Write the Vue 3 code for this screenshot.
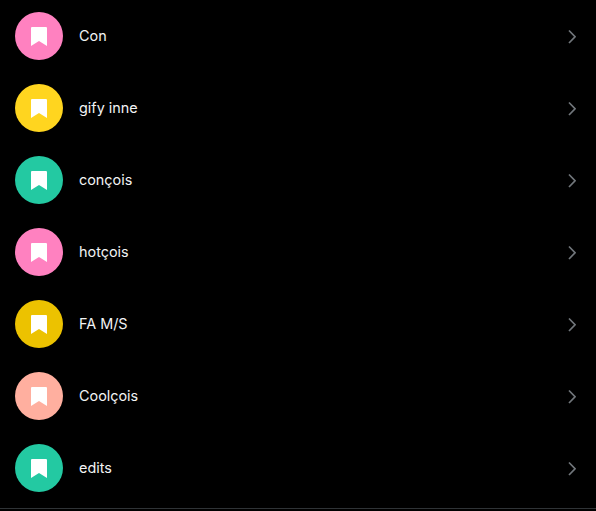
<script setup>
const lists = [
  { name: 'Con', color: '#ff81c0' },
  { name: 'gify inne', color: '#ffd51f' },
  { name: 'conçois', color: '#23c9a2' },
  { name: 'hotçois', color: '#ff81c0' },
  { name: 'FA M/S', color: '#ecc200' },
  { name: 'Coolçois', color: '#ffaf9f' },
  { name: 'edits', color: '#23c9a2' }
]
</script>

<template>
  <div class="lists">
    <div v-for="list in lists" :key="list.name" class="row">
      <div class="avatar" :style="{ background: list.color }">
        <svg viewBox="0 0 16 19" class="bookmark">
          <path d="M0 1.2C0 .5.5 0 1.2 0h13.6c.7 0 1.2.5 1.2 1.2V19l-8-5-8 5z" fill="#fff" />
        </svg>
      </div>
      <span class="name">{{ list.name }}</span>
      <svg viewBox="0 0 8 15" class="chevron">
        <path d="M1 1.5l6 6.25-6 6.25" fill="none" stroke="#71767b" stroke-width="1.7" />
      </svg>
    </div>
    <div class="divider"></div>
  </div>
</template>

<style>
html, body {
  background: #000;
}
</style>

<style scoped>
.lists {
  width: 596px;
  height: 511px;
  background: #000;
  overflow: hidden;
}

.row {
  display: flex;
  align-items: center;
  height: 72px;
  padding: 0 20px 0 15px;
  box-sizing: border-box;
}

.avatar {
  display: flex;
  align-items: center;
  justify-content: center;
  width: 48px;
  height: 48px;
  border-radius: 50%;
  flex-shrink: 0;
}

.bookmark {
  width: 16px;
  height: 19px;
}

.name {
  flex: 1;
  margin-left: 16px;
  color: #f2f3f4;
  font-family: Inter, Roboto, sans-serif;
  font-size: 14.4px;
  line-height: 20px;
}

.chevron {
  width: 8px;
  height: 15px;
}

.divider {
  height: 1px;
  margin-top: 4px;
  background: #2f3336;
}
</style>
